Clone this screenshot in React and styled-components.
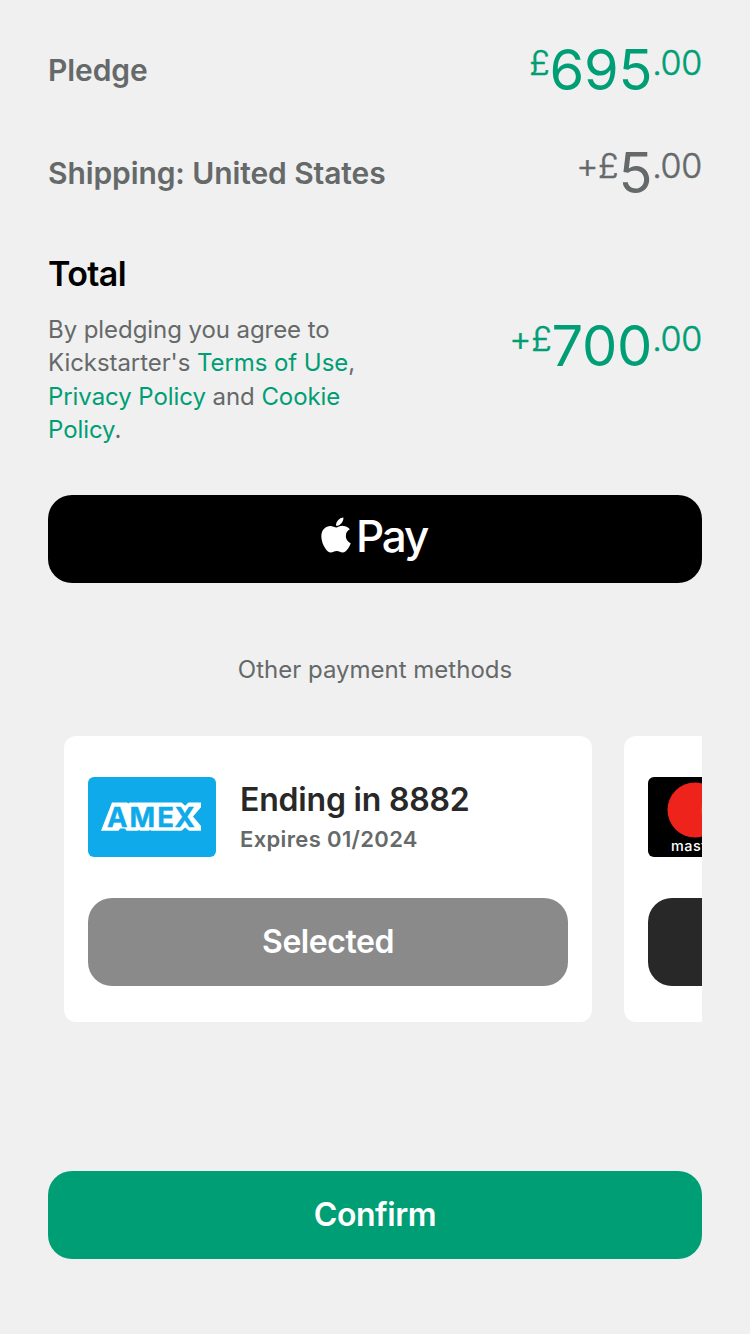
import React from "react";
import styled, { createGlobalStyle } from "styled-components";
import { FaApple } from "react-icons/fa";

const GlobalStyle = createGlobalStyle`
  *, *::before, *::after { box-sizing: border-box; }
  html, body { margin: 0; background: #f0f0f0; }
  body { font-family: Inter, "Liberation Sans", sans-serif; -webkit-font-smoothing: antialiased; }
  h1, h2, p { margin: 0; }
`;

const Page = styled.main`
  display: flex;
  flex-direction: column;
  width: 750px;
  height: 1334px;
  padding: 40px 48px 0;
  overflow: hidden;
  background: #f0f0f0;
`;

const SummaryRow = styled.section`
  display: flex;
  align-items: center;
  justify-content: space-between;
  height: 62px;
  margin-bottom: 41px;
`;

const RowLabel = styled.h2`
  padding-bottom: 2px;
  font-size: 30px;
  line-height: 36px;
  font-weight: 600;
  letter-spacing: -0.1px;
  color: #656969;
`;

const Amount = styled.div`
  display: flex;
  align-items: flex-start;
  height: 62px;
  color: ${(p) => (p.$muted ? "#656969" : "#009e74")};
`;

const Small = styled.span`
  font-size: 34px;
  line-height: 45px;
  font-weight: 300;
  letter-spacing: -0.3px;
  -webkit-text-stroke: 0.5px currentColor;
`;

const Whole = styled.span`
  font-size: 56px;
  line-height: 60px;
  font-weight: 400;
  letter-spacing: -0.3px;
`;

const TotalSection = styled.section`
  display: flex;
  align-items: flex-start;
  justify-content: space-between;
  height: 193px;
  margin: 8px 0 48px;
`;

const TotalText = styled.div`
  width: 330px;
`;

const TotalAmount = styled.div`
  padding-top: 62px;
`;

const TotalTitle = styled.h1`
  font-size: 34px;
  line-height: 40px;
  font-weight: 600;
  letter-spacing: -0.6px;
  color: #000;
`;

const Terms = styled.p`
  margin-top: 19px;
  font-size: 24px;
  line-height: 33.3px;
  letter-spacing: -0.07px;
  color: #656969;
`;

const Link = styled.a`
  color: #009e74;
`;

const Button = styled.button`
  display: flex;
  align-items: center;
  justify-content: center;
  flex: none;
  width: 100%;
  height: 88px;
  padding: 0;
  border: 0;
  border-radius: 24px;
  background: ${(p) => p.$bg};
  color: #fff;
  font: 600 32px/40px Inter, "Liberation Sans", sans-serif;
  letter-spacing: -0.45px;
`;

const AppleMark = styled(FaApple)`
  width: 30px;
  height: 40px;
  margin: -9px 5px 0 0;
`;

const PayWord = styled.span`
  margin-top: -6px;
  margin-right: 2px;
  font-size: 44px;
  line-height: 52px;
  font-weight: 500;
  letter-spacing: -2.2px;
`;

const OtherMethods = styled.p`
  margin-top: 71px;
  text-align: center;
  font-size: 24px;
  line-height: 32px;
  letter-spacing: 0;
  color: #656969;
`;

const CardStrip = styled.section`
  display: flex;
  gap: 32px;
  flex: none;
  height: 286px;
  margin-top: 50px;
  padding-left: 16px;
  overflow: hidden;
`;

const Card = styled.article`
  flex: none;
  width: 528px;
  padding: 41px 24px 36px;
  border-radius: 12px;
  background: #fff;
`;

const CardHeader = styled.div`
  display: flex;
  gap: 24px;
  height: 80px;
  margin-bottom: 41px;
`;

const Logo = styled.svg`
  display: block;
  flex: none;
  width: 128px;
  height: 80px;
  border-radius: 6px;
`;

const CardTitle = styled.h2`
  margin-top: 3px;
  font-size: 32px;
  line-height: 40px;
  font-weight: 600;
  letter-spacing: -0.2px;
  color: #282828;
`;

const Expiry = styled.p`
  margin-top: 5px;
  font-size: 22px;
  line-height: 28px;
  font-weight: 600;
  letter-spacing: 0.35px;
  color: #656969;
`;

const Footer = styled.footer`
  margin-top: 149px;
`;

const AmexText = styled.text`
  font: 700 27.5px Inter, sans-serif;
  fill: #0eaaea;
  stroke: #0eaaea;
  stroke-width: 0.4px;
`;

const MastercardText = styled.text`
  font: 500 14.4px Inter, sans-serif;
  letter-spacing: 0.5px;
  fill: #fff;
`;

function AmexLogo() {
  return (
    <Logo viewBox="0 0 128 80" role="img" aria-label="American Express">
      <rect width="128" height="80" fill="#0eaaea" />
      <path
        d="M13 53.8 24 25.5h15l1.5 1 1-1h52l3.6 3.2 3.4-3.2H113v4.8l-8 9.2 8 9.6v4.7h-12l-3.8-3.4-3.6 3.4H63l-1-1-1 1h-9l-1-1-1 1H38.5L37 51.6h-5l-1.4 2.2z"
        fill="#fff"
      />
      <AmexText x="19 41.4 69.2 86.6" y="49.7">
        AMEX
      </AmexText>
    </Logo>
  );
}

function MastercardLogo() {
  return (
    <Logo viewBox="0 0 128 80" role="img" aria-label="Mastercard">
      <rect width="128" height="80" fill="#000" />
      <circle cx="81" cy="33" r="27.5" fill="#f79e1b" />
      <circle cx="47" cy="33" r="27.5" fill="#ee231c" />
      <path d="M64 11.4a27.5 27.5 0 0 1 0 43.2 27.5 27.5 0 0 1 0-43.2z" fill="#ff5f00" />
      <MastercardText x="23" y="74.4">
        mastercard
      </MastercardText>
    </Logo>
  );
}

function Price({ prefix, whole, muted }) {
  return (
    <Amount $muted={muted}>
      <Small>{prefix}</Small>
      <Whole>{whole}</Whole>
      <Small>.00</Small>
    </Amount>
  );
}

function PaymentCard({ logo, ending, expires, action, color }) {
  return (
    <Card>
      <CardHeader>
        {logo}
        {ending && (
          <div>
            <CardTitle>Ending in {ending}</CardTitle>
            <Expiry>Expires {expires}</Expiry>
          </div>
        )}
      </CardHeader>
      <Button $bg={color}>{action}</Button>
    </Card>
  );
}

export default function App() {
  return (
    <Page>
      <GlobalStyle />
      <SummaryRow>
        <RowLabel>Pledge</RowLabel>
        <Price prefix="£" whole="695" />
      </SummaryRow>
      <SummaryRow>
        <RowLabel>Shipping: United States</RowLabel>
        <Price prefix="+£" whole="5" muted />
      </SummaryRow>
      <TotalSection>
        <TotalText>
          <TotalTitle>Total</TotalTitle>
          <Terms>
            By pledging you agree to Kickstarter's <Link>Terms of Use</Link>,{" "}
            <Link>Privacy Policy</Link> and <Link>Cookie Policy</Link>.
          </Terms>
        </TotalText>
        <TotalAmount>
          <Price prefix="+£" whole="700" />
        </TotalAmount>
      </TotalSection>
      <Button $bg="#000" aria-label="Apple Pay">
        <AppleMark />
        <PayWord>Pay</PayWord>
      </Button>
      <OtherMethods>Other payment methods</OtherMethods>
      <CardStrip>
        <PaymentCard logo={<AmexLogo />} ending="8882" expires="01/2024" action="Selected" color="#8a8a8a" />
        <PaymentCard logo={<MastercardLogo />} color="#282828" />
      </CardStrip>
      <Footer>
        <Button $bg="#009e74">Confirm</Button>
      </Footer>
    </Page>
  );
}
